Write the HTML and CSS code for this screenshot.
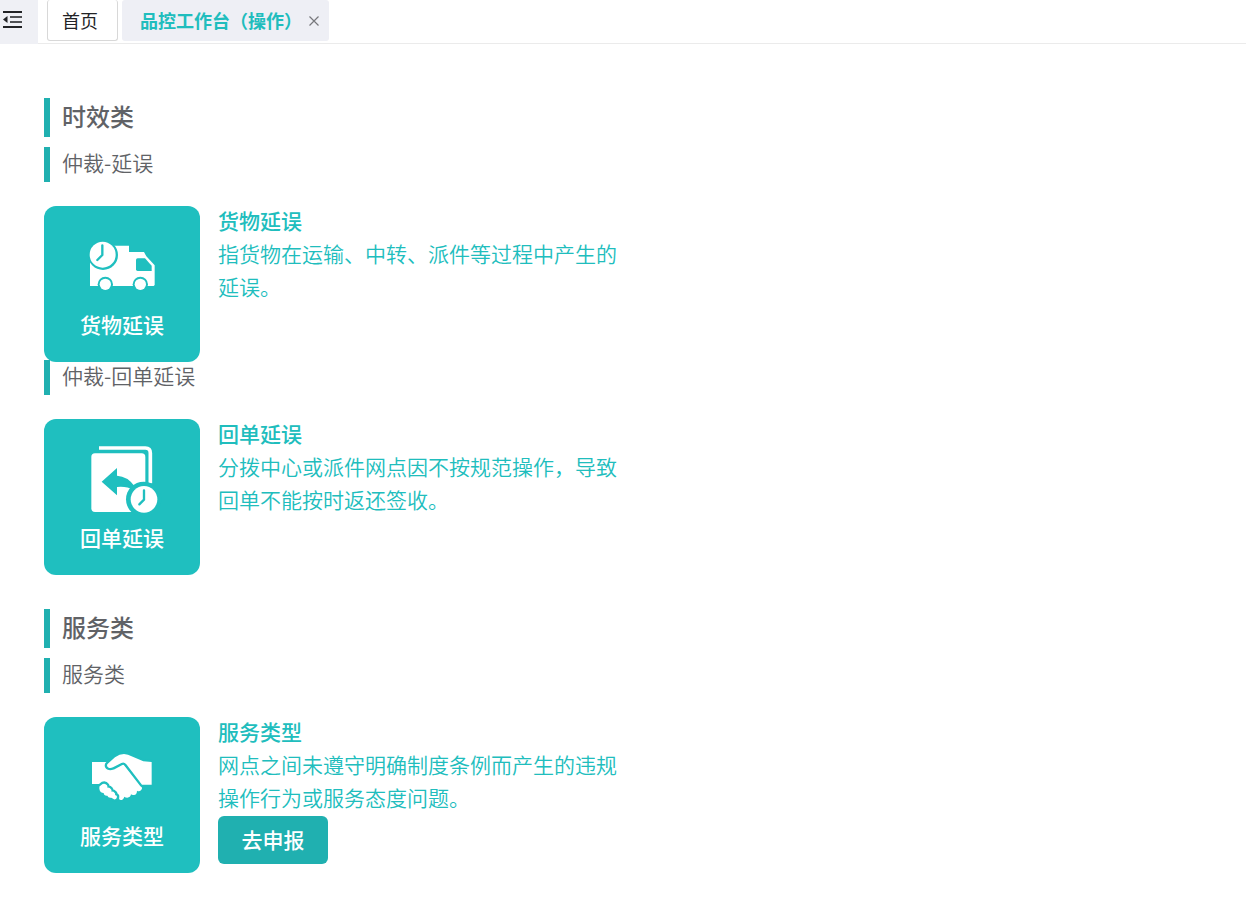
FILE: index.html
```html
<!DOCTYPE html>
<html lang="zh-CN">
<head>
<meta charset="utf-8">
<meta name="viewport" content="width=device-width, initial-scale=1">
<title>品控工作台（操作）</title>
<link rel="stylesheet" href="styles.css">
</head>
<body>
<header class="topbar">
  <button class="toggle" type="button" aria-label="收起菜单">
    <svg class="toggle-icon" viewBox="0 0 20 18" aria-hidden="true">
      <path d="M0 1h19M0 16h19" stroke="#222326" stroke-width="2"/>
      <path d="M7 6h12M7 11h12" stroke="#505155" stroke-width="2"/>
      <path d="M0 8.500L4.500 5v7z" fill="#222326"/>
    </svg>
  </button>
  <nav class="tabs">
    <a class="tab" href="#home">首页</a>
    <div class="tab tab-active">
      <a class="tab-link" href="#workbench" aria-current="page">品控工作台（操作）</a>
      <button class="close" type="button" aria-label="关闭">
        <svg class="close-icon" viewBox="0 0 10 10" aria-hidden="true"><path d="M0.500 0.500l9 9M9.500 0.500l-9 9" stroke="#77787c" stroke-width="1.200"/></svg>
      </button>
    </div>
  </nav>
</header>
<main class="content">
  <section class="category">
    <h2 class="category-title">时效类</h2>
    <h3 class="group-title">仲裁-延误</h3>
    <article class="entry">
      <button class="card" type="button">
        <svg class="card-icon" viewBox="0 -12 252 246" aria-hidden="true">
          <path fill="#fff" d="M30 168V60h66V47h51v19h45l7 13 25 27v59l-3 3z"/>
          <g fill="#1fbfbf">
            <path d="M173 85h22l20 22v16h-42q-5 0-5-5V90q0-5 5-5z"/>
            <circle cx="69" cy="75" r="45"/>
            <circle cx="76" cy="163" r="23"/>
            <circle cx="181" cy="163" r="23"/>
          </g>
          <g fill="#fff">
            <circle cx="68" cy="74" r="39"/>
            <circle cx="76" cy="163" r="17"/>
            <circle cx="181" cy="163" r="17"/>
          </g>
          <path d="M67 46v29L52 90" fill="none" stroke="#1fbfbf" stroke-width="7" stroke-linecap="round" stroke-linejoin="round"/>
        </svg>
        <span class="card-label">货物延误</span>
      </button>
      <div class="detail">
        <h4 class="detail-title">货物延误</h4>
        <p class="detail-text">指货物在运输、中转、派件等过程中产生的延误。</p>
      </div>
    </article>
    <h3 class="group-title">仲裁-回单延误</h3>
    <article class="entry">
      <button class="card" type="button">
        <svg class="card-icon" viewBox="0 12 252 246" aria-hidden="true">
          <path d="M57 39h139q15 0 15 15v91" fill="none" stroke="#fff" stroke-width="11"/>
          <rect x="34" y="55" width="162" height="176" rx="11" fill="#fff"/>
          <g fill="#1fbfbf">
            <path d="M65 140l46-41v23q32 2 52 31l-3 12q-20-12-49-9v25z"/>
            <circle cx="191" cy="193" r="53"/>
          </g>
          <circle cx="192" cy="193" r="40" fill="#fff"/>
          <path d="M192 166v28l-14 14" fill="none" stroke="#1fbfbf" stroke-width="7" stroke-linecap="round" stroke-linejoin="round"/>
        </svg>
        <span class="card-label">回单延误</span>
      </button>
      <div class="detail">
        <h4 class="detail-title">回单延误</h4>
        <p class="detail-text">分拨中心或派件网点因不按规范操作，导致回单不能按时返还签收。</p>
      </div>
    </article>
  </section>
  <section class="category">
    <h2 class="category-title">服务类</h2>
    <h3 class="group-title">服务类</h3>
    <article class="entry">
      <button class="card" type="button">
        <svg class="card-icon" viewBox="0 -9 252 246" aria-hidden="true">
          <path fill="#fff" d="M36 66h90l59 74q3 6-2 11-6 5-12 1 0 12-9 13-6 1-9-2-2 10-11 10-6 0-9-3-3 10-11 10-5 0-5-6L60 132H36z"/>
          <g fill="#fff" stroke="#1fbfbf" stroke-width="14" stroke-linejoin="round" paint-order="stroke">
            <path d="M81 76q0-3 4-6l20-18q14-10 27-10l12 2 46 20 25 2v68h-29l-47-61q-7-9-15-4l-25 13q-8 3-13 1-5-2-5-7z"/>
            <path d="M58 146q-2-7 5-10l5-4q8-3 13 4 2 4 1 7 7-1 11 5 3 4 1 7 6-1 10 4 3 3 1 6 7 1 6 6-2 9-9 7l-8-5q-9 2-12-6-10 1-11-8-11 0-13-13z"/>
          </g>
        </svg>
        <span class="card-label">服务类型</span>
      </button>
      <div class="detail">
        <h4 class="detail-title">服务类型</h4>
        <p class="detail-text">网点之间未遵守明确制度条例而产生的违规操作行为或服务态度问题。</p>
        <button class="apply" type="button">去申报</button>
      </div>
    </article>
  </section>
</main>
</body>
</html>
```
FILE: styles.css
```css
* {
  box-sizing: border-box;
}

body {
  margin: 0;
  background: #fff;
  color: #606266;
  font-family: "Noto Sans CJK SC", sans-serif;
  font-size: 21px;
  line-height: 33px;
}

h2, h3, h4, p {
  margin: 0;
}

button {
  padding: 0;
  border: 0;
  font: inherit;
  cursor: pointer;
}

a {
  color: inherit;
  text-decoration: none;
}

.topbar {
  display: flex;
  height: 44px;
  border-bottom: 1px solid #ebebeb;
  font-size: 18px;
}

.toggle {
  display: flex;
  align-items: center;
  width: 38px;
  height: 44px;
  padding: 0 0 4px 3px;
  background: #eff0f5;
}

.toggle-icon {
  width: 20px;
  height: 18px;
}

.tabs {
  display: flex;
  align-items: flex-start;
  gap: 4px;
  padding-left: 9px;
}

.tab {
  display: flex;
  align-items: center;
  height: 41px;
  padding: 0 19px 0 14px;
  border: 1px solid #d8d8d8;
  border-top: 0;
  border-radius: 3px;
  color: #222326;
}

.tab-active {
  gap: 7px;
  padding: 0 10px 0 18px;
  border: 0;
  background: #eeeff5;
  color: #20bdbd;
  font-weight: 700;
}

.close {
  display: flex;
  background: none;
}

.close-icon {
  width: 10px;
  height: 10px;
}

.content {
  padding: 54px 44px 24px;
}

.category {
  margin-bottom: 36px;
}

.category-title,
.group-title {
  padding: 0 0 4px 12px;
  border-left: 6px solid #20b0b0;
}

.category-title {
  margin-bottom: 10px;
  font-size: 24px;
  font-weight: 500;
  line-height: 35px;
}

.group-title {
  margin-bottom: 24px;
  font-size: 21px;
  font-weight: 350;
  line-height: 31px;
}

.entry {
  display: flex;
  gap: 18px;
  height: 154px;
}

.card {
  display: flex;
  flex: none;
  flex-direction: column;
  align-items: center;
  width: 156px;
  height: 156px;
  padding-top: 20px;
  border-radius: 12px;
  background: #1fbfbf;
  color: #fff;
}

.card-icon {
  width: 84px;
  height: 82px;
}

.card-label {
  font-weight: 500;
}

.detail {
  max-width: 400px;
  margin-top: -2px;
  color: #20bdbd;
}

.detail-title {
  font-size: 21px;
  font-weight: 500;
}

.detail-text {
  margin-bottom: 2px;
  font-weight: 350;
}

.apply {
  min-width: 110px;
  height: 48px;
  padding: 0 23px 2px;
  border-radius: 6px;
  background: #20b0b0;
  color: #fff;
  font-weight: 500;
}
```
